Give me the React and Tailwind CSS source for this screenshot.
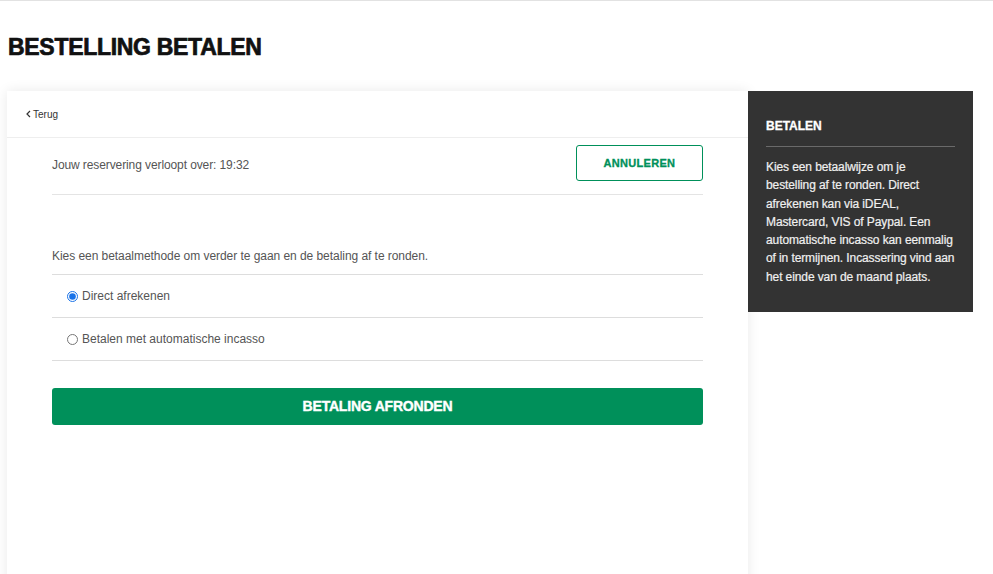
export default function App() {
  const font = { fontFamily: '"Liberation Sans", Arial, sans-serif' };
  const lines = [
    "Kies een betaalwijze om je",
    "bestelling af te ronden. Direct",
    "afrekenen kan via iDEAL,",
    "Mastercard, VIS of Paypal. Een",
    "automatische incasso kan eenmalig",
    "of in termijnen. Incassering vind aan",
    "het einde van de maand plaats.",
  ];
  return (
    <div className="min-h-[574px] bg-white border-t border-[#e2e2e2] overflow-hidden" style={font}>
      <h1 className="mt-[32px] ml-[8px] text-[23px] leading-[28px] font-black tracking-[-0.3px] text-[#111] [-webkit-text-stroke:0.7px_#111]">
        BESTELLING BETALEN
      </h1>
      <div className="mt-[30px] ml-[7px] flex items-start">
        <div className="w-[741px] h-[500px] bg-white shadow-[0_0_12px_rgba(0,0,0,0.09)]">
          <div className="h-[47px] flex items-center pl-[19px] border-b border-[#eeeeee] text-[10px] text-[#333]">
            <svg width="5" height="8" viewBox="0 0 5 8" className="mr-[2px]">
              <path d="M4 1 L1 4 L4 7" fill="none" stroke="#333" strokeWidth="1.2" />
            </svg>
            <span>Terug</span>
          </div>
          <div className="px-[45px]">
            <div className="flex items-center justify-between pt-[7px] pb-[13px] border-b border-[#e4e4e4]">
              <span className="text-[12px] tracking-[-0.1px] text-[#555] pt-[3px]">Jouw reservering verloopt over: 19:32</span>
              <button className="w-[127px] h-[36px] border border-[#00905a] rounded-[3px] text-[11px] font-bold tracking-[0.3px] text-[#00905a] [-webkit-text-stroke:0.3px_#00905a]">
                ANNULEREN
              </button>
            </div>
            <p className="pt-[53px] pb-[10px] leading-[16px] text-[12px] tracking-[-0.05px] text-[#555] border-b border-[#dddddd]">
              Kies een betaalmethode om verder te gaan en de betaling af te ronden.
            </p>
            <label className="h-[43px] flex items-center pl-[15px] border-b border-[#dddddd] text-[12px] text-[#555]">
              <input type="radio" name="pay" defaultChecked className="w-[11px] h-[11px] mr-[4px] accent-[#1a73e8]" />
              Direct afrekenen
            </label>
            <label className="h-[43px] flex items-center pl-[15px] border-b border-[#dddddd] text-[12px] text-[#555]">
              <input type="radio" name="pay" className="w-[11px] h-[11px] mr-[4px]" />
              Betalen met automatische incasso
            </label>
            <button className="mt-[27px] w-full h-[37px] bg-[#00905a] rounded-[3px] text-white text-[14px] font-black tracking-[-0.2px] [-webkit-text-stroke:0.4px_#fff]">
              BETALING AFRONDEN
            </button>
          </div>
        </div>
        <div className="w-[225px] bg-[#333333] px-[18px] pt-[27px] pb-[26px] text-white">
          <div className="text-[12px] leading-[16px] font-bold pb-[12px] border-b border-[#6a6a6a] [-webkit-text-stroke:0.3px_#fff]">BETALEN</div>
          <p className="mt-[11px] text-[12px] leading-[18.3px] tracking-[-0.1px] text-[#f0f0f0] [-webkit-text-stroke:0.2px_#f0f0f0] whitespace-nowrap">
            {lines.map((l, i) => (
              <span key={i} className="block">{l}</span>
            ))}
          </p>
        </div>
      </div>
    </div>
  );
}
